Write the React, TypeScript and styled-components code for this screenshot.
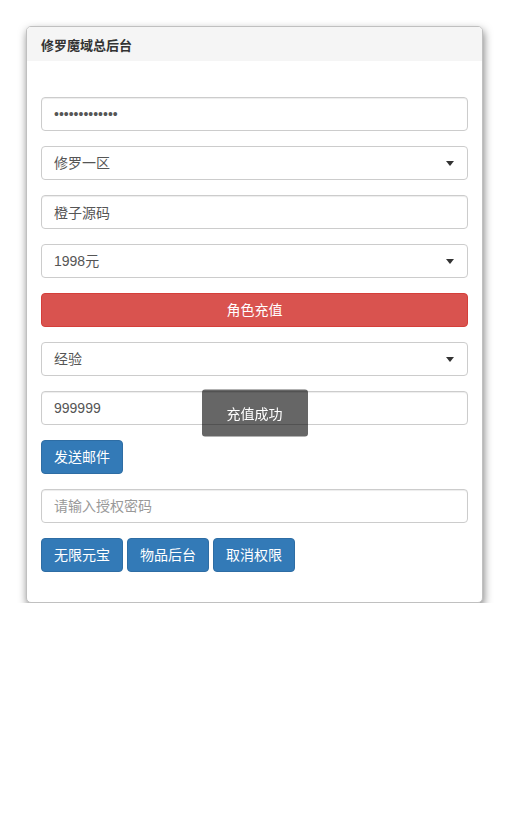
import styled, { createGlobalStyle } from 'styled-components';

const GlobalStyle = createGlobalStyle`
  * { box-sizing: border-box; }
  body {
    margin: 0;
    background: #fff;
    font-family: "Liberation Sans", "Noto Sans CJK SC", sans-serif;
    font-size: 14px;
    color: #333;
  }
`;

const Page = styled.div`
  padding: 26px 26px 0 26px;
`;

const Panel = styled.div`
  border: 1px solid #c0c0c0;
  border-radius: 5px;
  background: #fff;
  box-shadow: 1px 4px 9px rgba(0, 0, 0, 0.5);
  overflow: hidden;
`;

const PanelHeading = styled.div`
  height: 34px;
  padding: 0 14px;
  display: flex;
  align-items: center;
  background: #f5f5f5;
  font-size: 13px;
  font-weight: bold;
  color: #333;
`;

const PanelBody = styled.div`
  padding: 36px 14px 15px 14px;
  display: flex;
  flex-direction: column;
`;

const Group = styled.div`
  margin-bottom: 15px;
  position: relative;
`;

const Input = styled.input`
  display: block;
  width: 100%;
  height: 34px;
  padding: 6px 12px;
  border: 1px solid #ccc;
  border-radius: 4px;
  font-family: inherit;
  font-size: 14px;
  color: #555;
  background: #fff;
  box-shadow: inset 0 1px 1px rgba(0, 0, 0, 0.075);
  outline: none;
  &::placeholder { color: #999; }
`;

const Select = styled.select`
  display: block;
  width: 100%;
  height: 34px;
  padding: 6px 12px;
  border: 1px solid #ccc;
  border-radius: 4px;
  font-family: inherit;
  font-size: 14px;
  color: #555;
  background: #fff;
  appearance: none;
  outline: none;
`;

const Caret = styled.span`
  position: absolute;
  right: 14px;
  top: 15px;
  width: 0;
  height: 0;
  border-top: 5px solid #333;
  border-left: 4px solid transparent;
  border-right: 4px solid transparent;
  pointer-events: none;
`;

const Btn = styled.button<{ $variant?: 'danger' | 'primary'; $block?: boolean }>`
  display: ${(p) => (p.$block ? 'block' : 'inline-block')};
  width: ${(p) => (p.$block ? '100%' : 'auto')};
  height: 34px;
  padding: 6px 12px;
  border-radius: 4px;
  border: 1px solid ${(p) => (p.$variant === 'danger' ? '#d43f3a' : '#2e6da4')};
  background: ${(p) => (p.$variant === 'danger' ? '#d9534f' : '#337ab7')};
  color: #fff;
  font-family: inherit;
  font-size: 14px;
  line-height: 20px;
  cursor: pointer;
`;

const BtnRow = styled.div`
  display: flex;
  gap: 4px;
  margin-bottom: 15px;
`;

const Toast = styled.div`
  position: fixed;
  left: 50%;
  top: 50%;
  transform: translate(-50%, -50%);
  padding: 14px 25px 13px;
  border-radius: 3px;
  background: rgba(0, 0, 0, 0.6);
  color: #fff;
  font-size: 14px;
  line-height: 20px;
  white-space: nowrap;
`;

function SelectField({ value, options }: { value: string; options: string[] }) {
  return (
    <Group>
      <Select defaultValue={value}>
        {options.map((o) => (
          <option key={o}>{o}</option>
        ))}
      </Select>
      <Caret />
    </Group>
  );
}

export default function App() {
  return (
    <>
      <GlobalStyle />
      <Page>
        <Panel>
          <PanelHeading>修罗魔域总后台</PanelHeading>
          <PanelBody>
            <Group>
              <Input type="password" defaultValue="1234567890123" />
            </Group>
            <SelectField value="修罗一区" options={['修罗一区', '修罗二区']} />
            <Group>
              <Input type="text" defaultValue="橙子源码" />
            </Group>
            <SelectField value="1998元" options={['1998元', '998元', '648元']} />
            <Group>
              <Btn $variant="danger" $block>角色充值</Btn>
            </Group>
            <SelectField value="经验" options={['经验', '元宝']} />
            <Group>
              <Input type="text" defaultValue="999999" />
            </Group>
            <BtnRow>
              <Btn $variant="primary">发送邮件</Btn>
            </BtnRow>
            <Group>
              <Input type="text" placeholder="请输入授权密码" />
            </Group>
            <BtnRow>
              <Btn $variant="primary">无限元宝</Btn>
              <Btn $variant="primary">物品后台</Btn>
              <Btn $variant="primary">取消权限</Btn>
            </BtnRow>
          </PanelBody>
        </Panel>
      </Page>
      <Toast>充值成功</Toast>
    </>
  );
}
